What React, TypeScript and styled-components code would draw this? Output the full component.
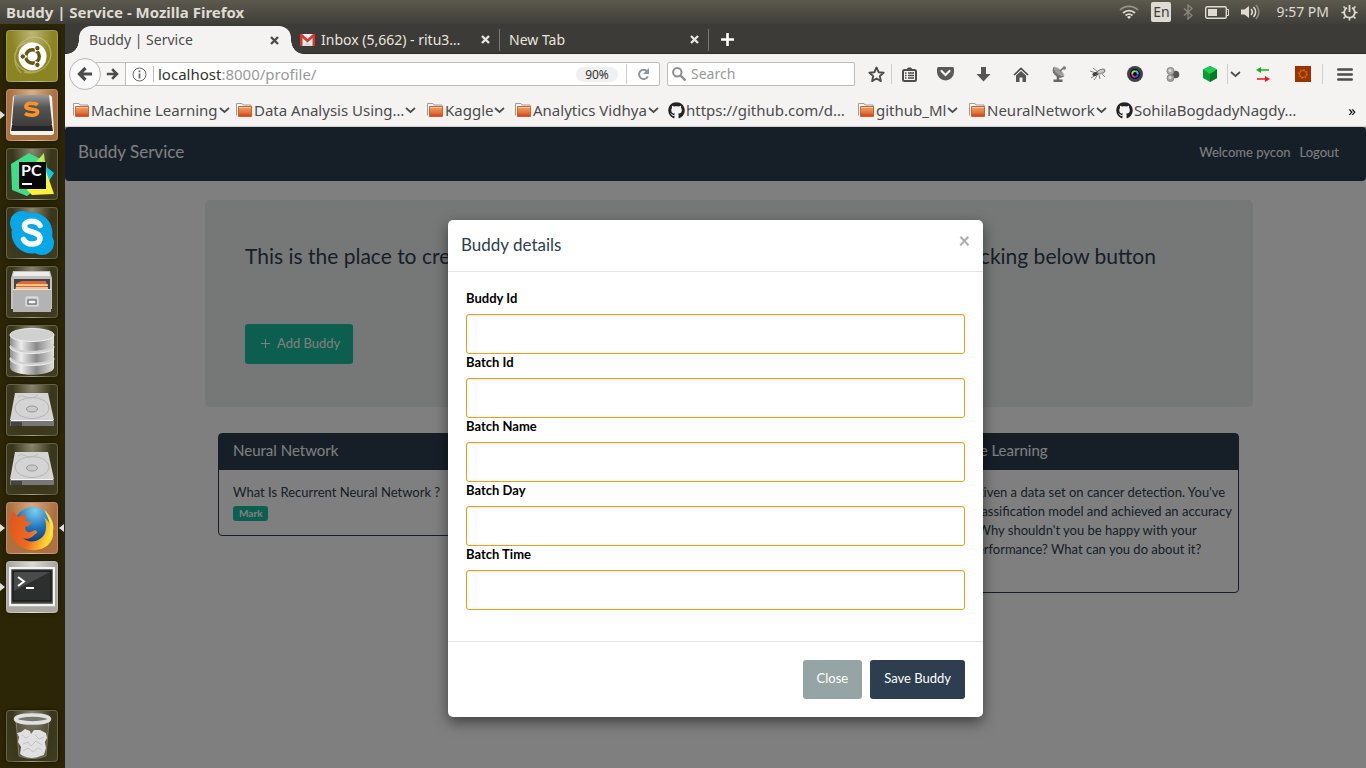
import React from "react";
import styled, { createGlobalStyle, css } from "styled-components";
import { FaGithub } from "react-icons/fa";

const UI_FONT = '"Noto Sans", "Open Sans", sans-serif';
const PAGE_FONT = 'Lato, "Liberation Sans", sans-serif';

const GlobalStyle = createGlobalStyle`
  *, *::before, *::after { box-sizing: border-box; }
  body { margin: 0; background: #808080; }
  button, input { font-family: inherit; margin: 0; }
  a { color: inherit; text-decoration: none; }
  h1, h2, h3, p { margin: 0; padding: 0; font-weight: 400; }
  svg { display: block; flex: none; }
`;

const Desktop = styled.div`
  display: flex;
  flex-direction: column;
  min-height: 100vh;
  font-family: ${UI_FONT};
`;

/* ---------- top panel ---------- */

const Panel = styled.header`
  display: flex;
  align-items: center;
  justify-content: space-between;
  height: 24px;
  padding: 0 8px 0 6px;
  background: linear-gradient(#5c594e, #3f3e39);
  color: #dfdbd2;
`;

const PanelTitle = styled.h1`
  font-size: 15px;
  line-height: 20px;
  font-weight: 700;
`;

const Indicators = styled.div`
  display: flex;
  align-items: center;
  gap: 12px;
`;

const Language = styled.span`
  width: 20px;
  height: 20px;
  border-radius: 2px;
  background: #dfdbd2;
  color: #3f3e39;
  font-size: 14px;
  line-height: 20px;
  text-align: center;
`;

const Clock = styled.time`
  font-size: 14px;
  line-height: 20px;
  margin-left: 4px;
`;

/* ---------- launcher ---------- */

const Workspace = styled.div`
  display: flex;
  flex: 1;
`;

const Launcher = styled.nav`
  display: flex;
  flex-direction: column;
  flex: none;
  gap: 7px;
  width: 65px;
  padding: 6px 0 6px 6px;
  background: #2c2606;
  border-right: 1px solid #26231d;
`;

const Tile = styled.button<{ $bg?: string; $last?: boolean; $running?: boolean; $focused?: boolean }>`
  position: relative;
  display: grid;
  place-items: center;
  width: 52px;
  height: 52px;
  padding: 0;
  border: 1px solid rgba(255, 255, 255, 0.2);
  border-radius: 4px;
  box-shadow: 0 0 4px rgba(0, 0, 0, 0.5);
  background: ${(p) => p.$bg ?? "radial-gradient(ellipse at 50% 0, #8b8770, #3a361a 55%, #403c20)"};
  ${(p) => p.$last && css`margin-top: auto;`}
  ${(p) =>
    p.$running &&
    css`
      &::before {
        content: "";
        position: absolute;
        left: -7px;
        border: 4px solid transparent;
        border-left: 5px solid #dfdfdf;
        border-right: 0;
      }
    `}
  ${(p) =>
    p.$focused &&
    css`
      &::after {
        content: "";
        position: absolute;
        right: -7px;
        border: 4px solid transparent;
        border-right: 5px solid #dfdfdf;
        border-left: 0;
      }
    `}
`;

/* ---------- browser chrome ---------- */

const Browser = styled.div`
  display: flex;
  flex-direction: column;
  flex: 1;
  min-width: 0;
`;

const TabStrip = styled.div`
  display: flex;
  align-items: center;
  height: 30px;
  padding: 2px 0 0 14px;
  background: #3c3b37;
  border-bottom: 1px solid #2b2a27;
  color: #e8e5df;
`;

const ActiveTab = styled.div`
  position: relative;
  display: flex;
  align-items: center;
  justify-content: space-between;
  align-self: stretch;
  width: 212px;
  margin-bottom: -1px;
  padding: 0 12px 0 10px;
  border-radius: 12px 12px 0 0;
  background: #f4f3f2;
  color: #4c4c4c;
  &::before,
  &::after {
    content: "";
    position: absolute;
    bottom: 0;
    width: 12px;
    height: 14px;
  }
  &::before {
    left: -12px;
    background: radial-gradient(ellipse 12px 14px at 0 0, transparent 96%, #f4f3f2);
  }
  &::after {
    right: -12px;
    background: radial-gradient(ellipse 12px 14px at 100% 0, transparent 96%, #f4f3f2);
  }
`;

const Tab = styled.div`
  display: flex;
  align-items: center;
  width: 209px;
  height: 22px;
  padding: 0 9px;
  gap: 6px;
  border-right: 1px solid #7a7974;
`;

const TabLabel = styled.span`
  flex: 1;
  font-size: 14px;
  line-height: 20px;
  white-space: nowrap;
`;

const ChromeButton = styled.button<{ $w?: number; $rule?: boolean }>`
  display: flex;
  flex: none;
  align-items: center;
  justify-content: center;
  width: ${(p) => (p.$w ? `${p.$w}px` : "auto")};
  height: 20px;
  padding: 0;
  border: 0;
  border-right: ${(p) => (p.$rule ? "1px solid #cfcecc" : "0")};
  background: none;
  color: inherit;
`;

const NavRow = styled.div`
  display: flex;
  align-items: center;
  height: 40px;
  padding-left: 4px;
  background: #f4f3f2;
  color: #4c4c4c;
`;

const BackButton = styled.button`
  z-index: 1;
  display: grid;
  place-items: center;
  flex: none;
  width: 32px;
  height: 32px;
  padding: 0;
  border: 1px solid #b9b7b4;
  border-radius: 50%;
  background: #fafafa;
  color: inherit;
`;

const AddressBox = styled.div`
  display: flex;
  align-items: center;
  flex: 1;
  min-width: 0;
  height: 24px;
  margin: 0 7px 0 -6px;
  border: 1px solid #bfbdba;
  border-radius: 0 2px 2px 0;
  background: #fff;
`;

const ForwardButton = styled.button`
  display: flex;
  align-items: center;
  justify-content: flex-end;
  width: 30px;
  height: 22px;
  padding: 0 6px 0 0;
  border: 0;
  border-right: 1px solid #bfbdba;
  background: #f7f6f5;
  color: inherit;
`;

const Address = styled.a`
  flex: 1;
  padding-left: 4px;
  border-left: 1px solid #bfbdba;
  color: #999;
  font-size: 15px;
  line-height: 16px;
  b {
    color: #333;
    font-weight: 400;
  }
`;

const ZoomLevel = styled.button`
  width: 42px;
  height: 15px;
  padding: 0;
  border: 0;
  border-radius: 8px;
  background: #f0f0f0;
  color: #333;
  font-size: 12px;
  line-height: 15px;
`;

const SearchBox = styled.label`
  display: flex;
  align-items: center;
  gap: 5px;
  width: 188px;
  height: 24px;
  margin-right: 6px;
  padding-left: 4px;
  border: 1px solid #bfbdba;
  border-radius: 2px;
  background: #fff;
`;

const SearchInput = styled.input`
  width: 150px;
  padding: 0;
  border: 0;
  outline: 0;
  background: none;
  font-size: 14px;
  line-height: 20px;
  &::placeholder {
    color: #999;
    opacity: 1;
  }
`;

const BookmarkRow = styled.div`
  display: flex;
  align-items: center;
  height: 33px;
  padding: 0 10px 0 8px;
  background: #f4f3f2;
  border-bottom: 1px solid #d0cfcd;
  color: #4c4c4c;
`;

const Bookmark = styled.a<{ $w: number }>`
  display: flex;
  align-items: center;
  gap: 1px;
  flex: none;
  width: ${(p) => p.$w}px;
  font-size: 15px;
  line-height: 20px;
  white-space: nowrap;
`;

const More = styled.button`
  margin-left: auto;
  padding: 0;
  border: 0;
  background: none;
  font-size: 15px;
  line-height: 20px;
`;

/* ---------- web page ---------- */

const Page = styled.div`
  position: relative;
  flex: 1;
  background: #fff;
  color: #2c3e50;
  font-family: ${PAGE_FONT};
  font-size: 13px;
  line-height: 19px;
`;

const Navbar = styled.nav`
  display: flex;
  align-items: center;
  justify-content: space-between;
  height: 54px;
  padding: 0 27px 4px 13px;
  border-radius: 4px;
  background: #2c3e50;
  color: #fff;
`;

const Brand = styled.a`
  font-size: 17px;
  line-height: 24px;
`;

const NavLinks = styled.div`
  display: flex;
  gap: 9px;
`;

const Content = styled.main`
  padding: 19px 113px 0 140px;
`;

const Jumbotron = styled.section`
  height: 207px;
  margin-bottom: 26px;
  padding: 42px 40px;
  border-radius: 5px;
  background: #ecf0f1;
`;

const Lead = styled.h2`
  display: flex;
  justify-content: space-between;
  max-width: 911px;
  margin-bottom: 54px;
  font-size: 21px;
  line-height: 28px;
  white-space: nowrap;
`;

const Button = styled.button<{ $bg: string; $tall?: boolean }>`
  height: ${(p) => (p.$tall ? 40 : 39)}px;
  padding: 0 14px 2px;
  border: 0;
  border-radius: 3px;
  background: ${(p) => p.$bg};
  color: #fff;
  font-size: 13px;
  line-height: 19px;
`;

const AddButton = styled(Button)`
  display: flex;
  align-items: center;
  gap: 7px;
  padding: 0 13px 2px 16px;
`;

const Cards = styled.div`
  display: grid;
  grid-template-columns: repeat(3, minmax(0, 1fr));
  align-items: start;
  gap: 26px;
  padding: 0 14px 0 13px;
`;

const Card = styled.article<{ $column: number }>`
  grid-column: ${(p) => p.$column};
  border: 1px solid #2c3e50;
  border-radius: 4px;
`;

const CardTitle = styled.h3`
  padding: 6px 14px 10px;
  background: #2c3e50;
  color: #fff;
  font-size: 15px;
  line-height: 20px;
`;

const CardBody = styled.div`
  padding: 13px 10px 14px 14px;
  white-space: nowrap;
`;

const Mark = styled.button`
  display: block;
  height: 15px;
  margin: 4px 0 0;
  padding: 0 6px 1px;
  border: 0;
  border-radius: 3px;
  background: #18bc9c;
  color: #fff;
  font-size: 10px;
  line-height: 14px;
  font-weight: 700;
`;

const Backdrop = styled.div`
  position: absolute;
  inset: 0;
  padding-top: 93px;
  background: rgba(0, 0, 0, 0.5);
`;

const Dialog = styled.form`
  width: 535px;
  margin: 0 auto;
  border-radius: 5px;
  background: #fff;
  box-shadow: 0 5px 14px rgba(0, 0, 0, 0.5);
`;

const DialogHeader = styled.div`
  display: flex;
  align-items: flex-start;
  justify-content: space-between;
  height: 52px;
  padding: 13px 13px 0;
  border-bottom: 1px solid #e5e5e5;
`;

const DialogTitle = styled.h2`
  font-size: 17px;
  line-height: 24px;
`;

const CloseCross = styled.button`
  height: 14px;
  padding: 0;
  border: 0;
  background: none;
  color: #a8adb2;
  font-size: 20px;
  line-height: 14px;
  font-weight: 700;
`;

const DialogBody = styled.div`
  padding: 17px 18px 32px;
`;

const Field = styled.label`
  display: block;
  color: #000;
  font-weight: 700;
  line-height: 19px;
`;

const FieldInput = styled.input`
  display: block;
  width: 100%;
  height: 40px;
  margin-top: 6px;
  margin-bottom: -1px;
  padding: 0 12px;
  border: 1px solid #f39c12;
  border-radius: 3px;
  background: #fff;
  box-shadow: inset 0 1px 1px rgba(0, 0, 0, 0.07);
`;

const DialogFooter = styled.div`
  display: flex;
  justify-content: flex-end;
  gap: 8px;
  padding: 18px;
  border-top: 1px solid #e5e5e5;
`;

/* ---------- icons ---------- */

const Cross = () => (
  <svg width="9" height="9" viewBox="0 0 9 9" stroke="currentColor" strokeWidth="2.4">
    <path d="M1 1l7 7M8 1l-7 7" />
  </svg>
);

const Chevron = () => (
  <svg width="11" height="8" viewBox="0 0 11 8" fill="none" stroke="#4c4c4c" strokeWidth="1.700">
    <path d="M1 2l4.500 4L10 2" />
  </svg>
);

const Folder = () => (
  <svg width="17" height="16" viewBox="0 0 17 16">
    <defs>
      <linearGradient id="folder" x1="0" y1="0" x2="0" y2="1">
        <stop offset="0" stopColor="#f0a56c" />
        <stop offset="0.65" stopColor="#e0703a" />
        <stop offset="1" stopColor="#cc3a14" />
      </linearGradient>
    </defs>
    <path d="M.5 13.500V1.500h5.500l1 1.500h8v3" fill="#f6f6f4" stroke="#a09d98" />
    <path d="M2.500 4.500h13v10h-13z" fill="url(#folder)" stroke="#d5622d" />
    <path d="M3 5.500h12" stroke="#f8c9a0" />
  </svg>
);

const Arrow = ({ flip }: { flip?: boolean }) => (
  <svg width={flip ? 13 : 16} height={flip ? 14 : 16} viewBox="0 0 16 16" fill="none" stroke="currentColor" strokeWidth="3.200">
    {flip ? <path d="M1 8h12M7.500 2l6 6-6 6" /> : <path d="M15 8H3M8.500 2l-6 6 6 6" />}
  </svg>
);

const Wifi = () => (
  <svg width="20" height="14" viewBox="0 0 20 14" fill="none" stroke="#dfdbd2" strokeWidth="1.700">
    <path d="M1 5a13 13 0 0 1 18 0" stroke="#98958c" />
    <path d="M4 8a9 9 0 0 1 12 0M6.500 10.500a5.500 5.500 0 0 1 7 0" />
    <path d="M8 12a3 3 0 0 1 4 0l-2 2z" fill="#dfdbd2" stroke="none" />
  </svg>
);

const Bluetooth = () => (
  <svg width="10" height="16" viewBox="0 0 10 16" fill="none" stroke="#8b8880" strokeWidth="1.300">
    <path d="M1 4.500l8 7-4 3.500V1l4 3.500-8 7" />
  </svg>
);

const Battery = () => (
  <svg width="24" height="13" viewBox="0 0 24 13">
    <rect x=".7" y=".7" width="20.600" height="11.600" rx="1.500" fill="none" stroke="#dfdbd2" strokeWidth="1.400" />
    <path d="M3 3h9v7H3z" fill="#dfdbd2" />
    <path d="M21.500 3.500h2v6h-2" fill="none" stroke="#dfdbd2" />
  </svg>
);

const Sound = () => (
  <svg width="19" height="16" viewBox="0 0 19 16" fill="none" stroke="#dfdbd2" strokeWidth="1.600">
    <path d="M0 5.500h3.500L8 2v12l-4.500-3.500H0z" fill="#dfdbd2" stroke="none" />
    <path d="M10 5a4.500 4.500 0 0 1 0 6M12.500 3a7 7 0 0 1 0 10" />
    <path d="M15 1a10 10 0 0 1 0 14" stroke="#8b8880" />
  </svg>
);

const Cog = () => (
  <svg width="17" height="17" viewBox="0 0 17 17" fill="none" stroke="#dfdbd2">
    <path d="M6 3.700a5.300 5.300 0 1 0 5 0" strokeWidth="1.800" />
    <path d="M8.500 1v7" strokeWidth="1.800" />
    <path d="M.5 8.500h3M13.500 8.500h3M8.500 13.500v3M2.500 2.500l2 2M14.500 2.500l-2 2M2.500 14.500l2-2M14.500 14.500l-2-2" strokeWidth="1.600" />
  </svg>
);

const Gmail = () => (
  <svg width="15" height="12" viewBox="0 0 15 12">
    <path d="M0 0h15v12H0z" fill="#eee" />
    <path d="M3 12l4.500-5 4.500 5z" fill="#d8d8d8" />
    <path d="M0 12V0h2l5.500 5L13 0h2v12h-2.500V4l-5 4.500-5-4.500v8z" fill="#d8382b" />
  </svg>
);

const Plus = () => (
  <svg width="13" height="13" viewBox="0 0 13 13" stroke="#fff" strokeWidth="2.600">
    <path d="M6.500 0v13M0 6.500h13" />
  </svg>
);

const Info = () => (
  <svg width="15" height="15" viewBox="0 0 15 15" fill="none" stroke="#666">
    <circle cx="7.500" cy="7.500" r="6.500" />
    <path d="M7.500 3.500v1.800M7.500 6.500v5" strokeWidth="1.800" />
  </svg>
);

const Reload = () => (
  <svg width="13" height="13" viewBox="0 0 13 13" fill="none" stroke="#8c969e" strokeWidth="2">
    <path d="M10 3.200A4.600 4.600 0 1 0 10.800 8.500" />
    <path d="M12 0v6H6z" fill="#8c969e" stroke="none" />
  </svg>
);

const Magnifier = () => (
  <svg width="14" height="14" viewBox="0 0 14 14" fill="none" stroke="#8d8d8d" strokeWidth="2">
    <circle cx="5.300" cy="5.300" r="4.200" />
    <path d="M8.500 8.500l5 5" strokeWidth="2.400" />
  </svg>
);

const Star = () => (
  <svg width="17" height="17" viewBox="0 0 17 17" fill="none" stroke="#4c4c4c" strokeWidth="1.900" strokeLinejoin="round">
    <path d="M8.500 1.500l2.100 4.700 5 .5-3.800 3.400 1.100 5-4.400-2.600-4.400 2.600 1.100-5L1.400 6.700l5-.5z" />
  </svg>
);

const ListIcon = () => (
  <svg width="15" height="15" viewBox="0 0 15 15" fill="none" stroke="#4c4c4c">
    <path d="M4.500 2.500l1.500-2h3l1.500 2z" fill="#4c4c4c" stroke="none" />
    <rect x="1" y="3" width="13" height="11" rx="1.500" strokeWidth="2" />
    <path d="M3 6h1.500M6 6h6M3 8.500h1.500M6 8.500h6M3 11h1.500M6 11h6" strokeWidth="1.300" />
  </svg>
);

const Pocket = () => (
  <svg width="17" height="14" viewBox="0 0 17 14">
    <path d="M1.500 0h14Q17 0 17 1.500V5a8.500 8.500 0 0 1-17 0V1.500Q0 0 1.500 0z" fill="#5a5a5a" />
    <path d="M4.500 4l4 4 4-4" fill="none" stroke="#f4f3f2" strokeWidth="2.200" strokeLinecap="round" />
  </svg>
);

const Download = () => (
  <svg width="15" height="15" viewBox="0 0 15 15">
    <path d="M5 0h5v7h4.500l-7 7.500L.5 7H5z" fill="#555" />
  </svg>
);

const Home = () => (
  <svg width="16" height="15" viewBox="0 0 16 15">
    <path d="M1 8l7-6.500L15 8" fill="none" stroke="#4c4c4c" strokeWidth="1.700" />
    <path d="M3 8.500l5-4.500 5 4.500V15H9.500v-4.500h-3V15H3z" fill="#555" />
  </svg>
);

const Dish = () => (
  <svg width="15" height="16" viewBox="0 0 15 16">
    <path d="M2 1a7 7 0 0 0 10 9z" fill="#777" stroke="#666" />
    <path d="M2 1c4 0 10 5 10 9-4 0-10-5-10-9z" fill="#999" stroke="#bbb" strokeWidth=".7" />
    <path d="M8 5l4-3.500" stroke="#666" strokeWidth="1.500" />
    <path d="M6 10v4M1.500 14.800h9" stroke="#666" strokeWidth="2.400" />
    <circle cx="12.300" cy="2" r="1.700" fill="#777" />
  </svg>
);

const Fly = () => (
  <svg width="17" height="14" viewBox="0 0 17 14" fill="none">
    <path d="M1 4l6 2M2 11l5-3M5 13l3-4M10 8l1 4M13 7l3 3M4 1l5 4" stroke="#777" strokeWidth=".9" />
    <ellipse cx="6.500" cy="7" rx="3.200" ry="1.900" fill="#444" transform="rotate(-20 6.500 7)" />
    <ellipse cx="12" cy="4.500" rx="4" ry="2" fill="#c8c8c8" stroke="#777" transform="rotate(-20 12 4.500)" />
  </svg>
);

const Lens = () => (
  <svg width="16" height="16" viewBox="0 0 16 16" fill="none">
    <circle cx="8" cy="8" r="8" fill="#3d4248" />
    <circle cx="8" cy="8" r="5" fill="#0a0a0a" />
    <path d="M5.200 8A2.800 2.800 0 0 1 8 5.200" stroke="#b3e02c" strokeWidth="1.800" />
    <path d="M8 5.200A2.800 2.800 0 0 1 10.800 8" stroke="#28c8e8" strokeWidth="1.800" />
    <path d="M10.800 8A2.800 2.800 0 0 1 8 10.800" stroke="#3b50e0" strokeWidth="1.800" />
    <path d="M8 10.800A2.800 2.800 0 0 1 5.200 8" stroke="#e0289c" strokeWidth="1.800" />
  </svg>
);

const Balls = () => (
  <svg width="14" height="15" viewBox="0 0 14 15">
    <circle cx="9.500" cy="7.500" r="3.800" fill="#555" />
    <circle cx="4.500" cy="4" r="3.600" fill="#aaa" stroke="#8a8a8a" />
    <circle cx="4.500" cy="11" r="3.500" fill="#a0a0a0" stroke="#888" />
    <circle cx="4" cy="3.500" r="1.500" fill="#ddd" />
    <circle cx="4" cy="10.500" r="1.500" fill="#ddd" />
  </svg>
);

const Cube = () => (
  <svg width="14" height="16" viewBox="0 0 14 16">
    <path d="M7 0l7 3.500v8.500l-7 4-7-4V3.500z" fill="#0a9c32" />
    <path d="M7 0l7 3.500L7 8 0 3.500z" fill="#1ccc4c" />
    <path d="M7 8l7-4.500v8.500l-7 4z" fill="#057a22" />
  </svg>
);

const Swap = () => (
  <svg width="14" height="15" viewBox="0 0 14 15">
    <path d="M0 3L5 0v2.200h8v1.600H5V6z" fill="#0db814" />
    <path d="M14 12l-5-3v2.200H1v1.600h8V15z" fill="#f21818" />
  </svg>
);

const Rust = () => (
  <svg width="16" height="16" viewBox="0 0 16 16">
    <path d="M0 0h16v16H0z" fill="#9c3200" />
    <circle cx="8" cy="8" r="3.500" fill="none" stroke="#c8781a" />
    <circle cx="8" cy="8" r="4.600" fill="none" stroke="#c8781a" strokeDasharray="1.300 2.300" />
  </svg>
);

const Burger = () => (
  <svg width="16" height="13" viewBox="0 0 16 13" stroke="#4c4c4c" strokeWidth="2.600" strokeLinecap="round">
    <path d="M1.300 1.500h13.400M1.300 6.500h13.400M1.300 11.500h13.400" />
  </svg>
);

const ThinPlus = () => (
  <svg width="9" height="9" viewBox="0 0 9 9" stroke="#fff">
    <path d="M4.500 0v9M0 4.500h9" />
  </svg>
);

const Ubuntu = () => (
  <svg width="50" height="50" viewBox="0 0 50 50" fill="none">
    <path d="M14 42C4 32 6 14 22 7c14-4 25 8 21 22M10 17C24 4 40 16 38 32M43 18c4 14-10 27-26 23M8 22c-2 14 12 22 24 18" stroke="#d6d19a" strokeOpacity=".5" strokeWidth="1.300" />
    <circle cx="25.500" cy="25.500" r="14" fill="#fff" />
    <circle cx="25.500" cy="25.500" r="6.800" stroke="#5f5712" strokeWidth="3.400" />
    <path d="M20 25.500h-5M28.200 20.800l2.500-4.300M28.200 30.200l2.500 4.300" stroke="#fff" strokeWidth="2" />
    <g fill="#5f5712" stroke="#fff">
      <circle cx="15.800" cy="25.500" r="2.700" />
      <circle cx="30.400" cy="17.100" r="2.700" />
      <circle cx="30.400" cy="33.900" r="2.700" />
    </g>
  </svg>
);

const Sublime = () => (
  <svg width="46" height="46" viewBox="0 0 46 46">
    <defs>
      <linearGradient id="key" x1="0" y1="0" x2="0" y2="1">
        <stop offset="0" stopColor="#9a9a9a" />
        <stop offset=".4" stopColor="#555" />
        <stop offset="1" stopColor="#3b3b3b" />
      </linearGradient>
    </defs>
    <path d="M4 5q1-2 3-2h33q2 0 3 2l2 35q0 3-3 3H4q-3 0-3-3z" fill="#f1f1f1" />
    <path d="M3 33h40l1 6H2z" fill="#252525" />
    <path d="M7 3h33l3 28q0 3-3 3H6q-3 0-3-3L5 5q0-2 2-2z" fill="url(#key)" />
    <path d="M28.500 13c-2-2-10.500-3-11.500 1-.8 5 12.500 1.500 11.500 6.500-1 4-9.500 3-12.500 1" fill="none" stroke="#ff9226" strokeWidth="3.600" />
  </svg>
);

const PyCharm = () => (
  <svg width="46" height="46" viewBox="0 0 46 46">
    <path d="M2 13L20 2l17 9 3 17-22 17L3 39z" fill="#3fdc8b" />
    <path d="M35 2l1 11-9-2z" fill="#b8ee55" />
    <path d="M35 14l10 8-8 13z" fill="#16c5ee" />
    <path d="M37 20l8 23-22 1-5-5z" fill="#fbf13d" />
    <path d="M10 11h27v27H10z" fill="#080808" />
    <path d="M13 33h10" stroke="#fff" strokeWidth="2" />
    <text x="12" y="25" fill="#fff" fontFamily="Lato, sans-serif" fontWeight="700" fontSize="16">PC</text>
  </svg>
);

const Skype = () => (
  <svg width="46" height="46" viewBox="0 0 46 46">
    <g fill="#08a7e8">
      <circle cx="23" cy="23" r="20.500" />
      <circle cx="13" cy="13" r="12" />
      <circle cx="33" cy="33" r="12" />
    </g>
    <path d="M31 15.500c-3-6-15.500-5.500-15.500.5C15.500 24 31 20 31 28.500c0 7-13 7.500-16.500 1" fill="none" stroke="#fff" strokeWidth="5.500" strokeLinecap="round" />
  </svg>
);

const Files = () => (
  <svg width="46" height="46" viewBox="0 0 46 46">
    <path d="M4 2h37l2 7v31H2V9z" fill="#c2c2c2" />
    <path d="M5 3h35l1 4H4z" fill="#ececec" />
    <path d="M5 10h36v12H5z" fill="#444" />
    <path d="M8 14l5-2h24l2 8H6z" fill="#d9683a" />
    <path d="M7 16h32M7 19h32" stroke="#ffe0a0" strokeWidth="1.500" />
    <path d="M4 20h38v23H4z" fill="#b3b3b3" />
    <path d="M4 20.500h38" stroke="#e4e4e4" />
    <rect x="17" y="28" width="12" height="9" rx="1" fill="#c9c9c9" stroke="#e8e8e8" />
    <rect x="19" y="31" width="8" height="4" fill="#f4f4f4" stroke="#555" />
  </svg>
);

const Database = () => (
  <svg width="46" height="50" viewBox="0 0 46 50">
    <defs>
      <linearGradient id="disk" x1="0" x2="1" y1="0" y2="0">
        <stop offset="0" stopColor="#8c8c8c" />
        <stop offset=".25" stopColor="#ededed" />
        <stop offset=".6" stopColor="#8a8a8a" />
        <stop offset="1" stopColor="#e0e0e0" />
      </linearGradient>
    </defs>
    {[33, 21, 9].map((y) => (
      <g key={y}>
        <path d={`M1 ${y}v9c2 9 42 9 44 0v-9z`} fill="url(#disk)" />
        <ellipse cx="23" cy={y} rx="22" ry="6.500" fill="#d0d0d0" stroke="#f0f0f0" />
      </g>
    ))}
  </svg>
);

const Drive = () => (
  <svg width="46" height="36" viewBox="0 0 46 36">
    <path d="M6 1h33l6 27v6H1v-6z" fill="#d4d4d4" />
    <path d="M1 28h44v6H1z" fill="#777" />
    <path d="M2 28.500h42" stroke="#f5f5f5" />
    <path d="M2 30h11v4H2z" fill="#444" />
    <ellipse cx="23" cy="16" rx="17" ry="10.500" fill="none" stroke="#b4b4b4" />
    <ellipse cx="23" cy="17" rx="5.500" ry="3" fill="#cacaca" stroke="#999" />
    <path d="M9 5q3-3 8 0t12-2" fill="none" stroke="#bbb" />
  </svg>
);

const Firefox = () => (
  <svg width="46" height="46" viewBox="0 0 46 46">
    <defs>
      <radialGradient id="globe" cx=".55" cy=".1" r=".9">
        <stop offset="0" stopColor="#7ad0f5" />
        <stop offset=".5" stopColor="#2077bd" />
        <stop offset="1" stopColor="#0b2d66" />
      </radialGradient>
      <linearGradient id="fox" x1="0" y1="0" x2="1" y2=".3">
        <stop offset="0" stopColor="#e0531c" />
        <stop offset=".6" stopColor="#ee6a1e" />
        <stop offset="1" stopColor="#ffd633" />
      </linearGradient>
    </defs>
    <circle cx="24" cy="21" r="19" fill="url(#globe)" />
    <path d="M4 6l5 6c3-2 6-3 8-2l-1 6 6 1-1 3-5 2c0 5 4 7 10 3 2 1 3 3 0 4-3 4-8 6-12 4 6 6 18 4 22-5 2-6 1-12-1-16 10 9 12 19 5 27-9 9-26 8-34-2C-1 28 0 15 4 6z" fill="url(#fox)" />
    <path d="M35 5c10 8 13 21 4 31 4-10 3-19-4-31z" fill="#ffe14a" />
  </svg>
);

const Terminal = () => (
  <svg width="46" height="40" viewBox="0 0 46 40">
    <rect x="1" y="1" width="44" height="37" fill="#444" stroke="#f2f2f2" strokeWidth="2.500" />
    <rect x="4" y="4" width="38" height="30" fill="#2c2f2e" stroke="#111" />
    <path d="M5 5h36L5 24z" fill="#484b4a" />
    <path d="M9 10l6 4.500L9 19M17 21h8" fill="none" stroke="#fff" strokeWidth="2" />
  </svg>
);

const Trash = () => (
  <svg width="42" height="48" viewBox="0 0 42 48">
    <path d="M5 8h33l-3 36q-13 5-27 0z" fill="#77756a" fillOpacity=".35" stroke="#a5a396" strokeOpacity=".6" />
    <ellipse cx="21.500" cy="7" rx="17" ry="4" fill="#77756c" stroke="#e0e0e0" strokeWidth="3.500" />
    <path d="M6 21l4-1 4-3 5 2 1 3 3-4 6 0 6 3 1 5-2 4 1 6-2 7-3 1q-9 4-18 0l-3-2 1-7-3-5 1-5z" fill="#e0e0e0" />
    <path d="M11 23l4 3 3-2M24 23l4 4 5-2M12 32l5-2 3 4 5-5 6 4M12 39l5-3 5 4 5-4 4 2" fill="none" stroke="#c2c2c2" />
  </svg>
);

/* ---------- data ---------- */

const launcherItems = [
  { name: "Search", icon: <Ubuntu />, bg: "radial-gradient(ellipse at 50% 0, #bdb879, #8b8420 60%, #8a8428)" },
  { name: "Sublime Text", icon: <Sublime />, bg: "radial-gradient(ellipse at 50% 0, #d6b08c, #a9713c 65%)", running: true },
  { name: "PyCharm", icon: <PyCharm /> },
  { name: "Skype", icon: <Skype /> },
  { name: "Files", icon: <Files /> },
  { name: "Database", icon: <Database /> },
  { name: "Drive 1", icon: <Drive /> },
  { name: "Drive 2", icon: <Drive /> },
  { name: "Firefox", icon: <Firefox />, bg: "radial-gradient(ellipse at 50% 0, #d9a981, #ad7040 65%)", running: true, focused: true },
  { name: "Terminal", icon: <Terminal />, bg: "radial-gradient(ellipse at 50% 0, #dcdad8, #aaa7a3 65%)", running: true },
];

const bookmarks = [
  { label: "Machine Learning", width: 163 },
  { label: "Data Analysis Using…", width: 191 },
  { label: "Kaggle", width: 88 },
  { label: "Analytics Vidhya", width: 153 },
  { label: "https://github.com/d…", width: 190, github: true },
  { label: "github_Ml", width: 111 },
  { label: "NeuralNetwork", width: 147 },
  { label: "SohilaBogdadyNagdy…", width: 190, github: true },
];

const toolbar = [
  { name: "Bookmark this page", icon: <Star />, width: 31, rule: true },
  { name: "Bookmarks", icon: <ListIcon />, width: 34 },
  { name: "Pocket", icon: <Pocket />, width: 38 },
  { name: "Downloads", icon: <Download />, width: 38 },
  { name: "Home", icon: <Home />, width: 38 },
  { name: "Feeds", icon: <Dish />, width: 38 },
  { name: "Firebug", icon: <Fly />, width: 38 },
  { name: "Color picker", icon: <Lens />, width: 38 },
  { name: "Add-ons", icon: <Balls />, width: 38 },
  { name: "Package", icon: <Cube />, width: 36, rule: true },
  { name: "Package menu", icon: <Chevron />, width: 15 },
  { name: "Proxy", icon: <Swap />, width: 40 },
  { name: "Settings", icon: <Rust />, width: 40, rule: true },
  { name: "Menu", icon: <Burger />, width: 43 },
];

const fields = ["Buddy Id", "Batch Id", "Batch Name", "Batch Day", "Batch Time"];

export default function App() {
  return (
    <Desktop>
      <GlobalStyle />
      <Panel>
        <PanelTitle>Buddy | Service - Mozilla Firefox</PanelTitle>
        <Indicators>
          <Wifi />
          <Language>En</Language>
          <Bluetooth />
          <Battery />
          <Sound />
          <Clock>9:57 PM</Clock>
          <Cog />
        </Indicators>
      </Panel>
      <Workspace>
        <Launcher>
          {launcherItems.map((item) => (
            <Tile key={item.name} aria-label={item.name} $bg={item.bg} $running={item.running} $focused={item.focused}>
              {item.icon}
            </Tile>
          ))}
          <Tile aria-label="Trash" $last>
            <Trash />
          </Tile>
        </Launcher>
        <Browser>
          <TabStrip>
            <ActiveTab>
              <TabLabel>Buddy | Service</TabLabel>
              <ChromeButton aria-label="Close tab"><Cross /></ChromeButton>
            </ActiveTab>
            <Tab>
              <Gmail />
              <TabLabel>Inbox (5,662) - ritu3…</TabLabel>
              <ChromeButton aria-label="Close tab"><Cross /></ChromeButton>
            </Tab>
            <Tab>
              <TabLabel>New Tab</TabLabel>
              <ChromeButton aria-label="Close tab"><Cross /></ChromeButton>
            </Tab>
            <ChromeButton aria-label="Open a new tab" $w={36}><Plus /></ChromeButton>
          </TabStrip>
          <NavRow>
            <BackButton aria-label="Back"><Arrow /></BackButton>
            <AddressBox>
              <ForwardButton aria-label="Forward"><Arrow flip /></ForwardButton>
              <ChromeButton aria-label="Site information" $w={27}><Info /></ChromeButton>
              <Address href="#profile"><b>localhost</b>:8000/profile/</Address>
              <ZoomLevel>90%</ZoomLevel>
              <ChromeButton aria-hidden $w={9} $rule />
              <ChromeButton aria-label="Reload" $w={32}><Reload /></ChromeButton>
            </AddressBox>
            <SearchBox>
              <Magnifier />
              <SearchInput aria-label="Search" placeholder="Search" />
            </SearchBox>
            {toolbar.map((tool) => (
              <ChromeButton key={tool.name} aria-label={tool.name} $w={tool.width} $rule={tool.rule}>
                {tool.icon}
              </ChromeButton>
            ))}
          </NavRow>
          <BookmarkRow>
            {bookmarks.map((mark) => (
              <Bookmark key={mark.label} href="#bookmark" $w={mark.width}>
                {mark.github ? <FaGithub size={17} color="#222" /> : <Folder />}
                <span>{mark.label}</span>
                {!mark.github && <Chevron />}
              </Bookmark>
            ))}
            <More aria-label="More bookmarks">»</More>
          </BookmarkRow>
          <Page>
            <Navbar>
              <Brand href="#home">Buddy Service</Brand>
              <NavLinks>
                <a href="#account">Welcome pycon</a>
                <a href="#logout">Logout</a>
              </NavLinks>
            </Navbar>
            <Content>
              <Jumbotron>
                <Lead>
                  <span>This is the place to create</span>
                  <span>by clicking below button</span>
                </Lead>
                <AddButton $bg="#18bc9c" $tall>
                  <ThinPlus />
                  Add Buddy
                </AddButton>
              </Jumbotron>
              <Cards>
                <Card $column={1}>
                  <CardTitle>Neural Network</CardTitle>
                  <CardBody>
                    <p>What Is Recurrent Neural Network ?</p>
                    <Mark>Mark</Mark>
                  </CardBody>
                </Card>
                <Card $column={3}>
                  <CardTitle>Machine Learning</CardTitle>
                  <CardBody>
                    <p>
                      You are given a data set on cancer detection. You've
                      <br />
                      build a classification model and achieved an accuracy
                      <br />
                      of 96%. Why shouldn't you be happy with your
                      <br />
                      model performance? What can you do about it?
                    </p>
                    <Mark>Mark</Mark>
                  </CardBody>
                </Card>
              </Cards>
            </Content>
            <Backdrop>
              <Dialog role="dialog" aria-label="Buddy details">
                <DialogHeader>
                  <DialogTitle>Buddy details</DialogTitle>
                  <CloseCross type="button" aria-label="Dismiss">×</CloseCross>
                </DialogHeader>
                <DialogBody>
                  {fields.map((name) => (
                    <Field key={name}>
                      {name}
                      <FieldInput type="text" />
                    </Field>
                  ))}
                </DialogBody>
                <DialogFooter>
                  <Button type="button" $bg="#95a5a6">Close</Button>
                  <Button type="button" $bg="#2c3e50">Save Buddy</Button>
                </DialogFooter>
              </Dialog>
            </Backdrop>
          </Page>
        </Browser>
      </Workspace>
    </Desktop>
  );
}
